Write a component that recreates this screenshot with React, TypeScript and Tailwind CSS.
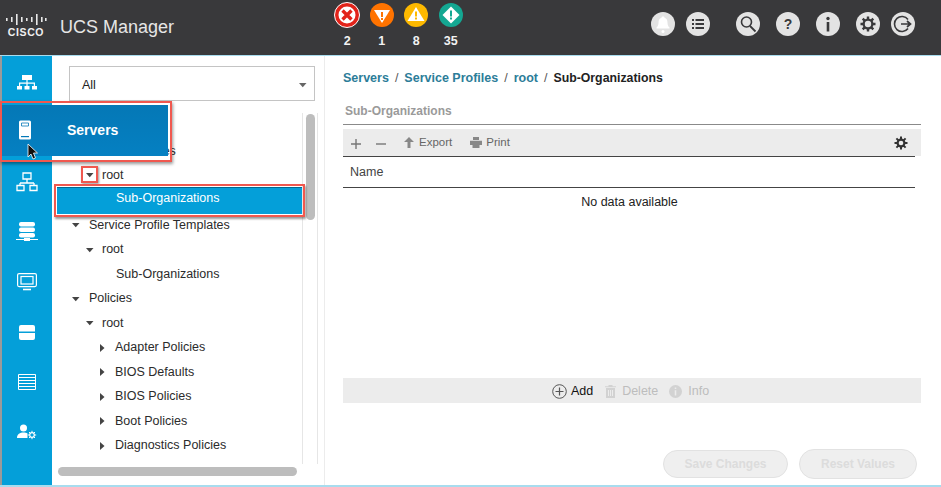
import React from "react";

const font = { fontFamily: '"Liberation Sans", Arial, sans-serif' };

const CiscoLogo = () => (
  <div className="mb-[4px] ml-[5px] flex w-[42px] shrink-0 flex-col items-center">
    <svg width="41" height="11" viewBox="0 0 41 11" fill="#e8e8e8">
      {[
        [0, 4, 3],
        [5, 3, 5],
        [10, 0, 11],
        [15, 3, 5],
        [20, 4, 3],
        [25, 3, 5],
        [30, 0, 11],
        [35, 3, 5],
        [39, 4, 3],
      ].map(([x, y, h]) => (
        <rect key={x} x={x} y={y} width="1.6" height={h} />
      ))}
    </svg>
    <span className="mt-[2px] text-[10.5px] leading-[11px] font-bold tracking-[0.6px] text-[#f0f0f0]">CISCO</span>
  </div>
);

const Tri = ({ dir = "down", color = "#444" }: { dir?: "down" | "right"; color?: string }) => (
  <svg width="8" height="8" viewBox="0 0 8 8" fill={color} className="shrink-0">
    {dir === "down" ? <path d="M0 2h7.5L3.75 6.2z" /> : <path d="M1 0v8l4.5-4z" />}
  </svg>
);

const alerts = [
  {
    n: "2",
    icon: (
      <svg viewBox="0 0 26 26" className="h-[26px] w-[26px]">
        <circle cx="13" cy="13" r="12.5" fill="#e2231a" stroke="#fff" strokeWidth="1" />
        <circle cx="13" cy="13" r="8.5" fill="#fff" />
        <path d="M8.5 8.5l9 9M17.5 8.5l-9 9" stroke="#e2231a" strokeWidth="3.4" />
      </svg>
    ),
  },
  {
    n: "1",
    icon: (
      <svg viewBox="0 0 24 24" className="h-6 w-6">
        <circle cx="12" cy="12" r="12" fill="#ff7300" />
        <path d="M4 7h16l-8 13z" fill="#fff" />
        <path d="M11 9h2v5h-2zM11 15h2v2h-2z" fill="#ff7300" />
      </svg>
    ),
  },
  {
    n: "8",
    icon: (
      <svg viewBox="0 0 24 24" className="h-6 w-6">
        <circle cx="12" cy="12" r="12" fill="#fdb900" />
        <path d="M12 4l8.5 14h-17z" fill="#fff" />
        <path d="M11 8.500h2v5h-2zM11 14.500h2v2h-2z" fill="#fdb900" />
      </svg>
    ),
  },
  {
    n: "35",
    icon: (
      <svg viewBox="0 0 24 24" className="h-6 w-6">
        <circle cx="12" cy="12" r="12" fill="#14a792" />
        <path d="M12 3.500l8.500 8.500-8.500 8.500-8.500-8.500z" fill="#fff" />
        <path d="M11 7.500h2v6h-2zM11 14.500h2v2h-2z" fill="#14a792" />
      </svg>
    ),
  },
];

const Circle = ({ className = "", children }: { className?: string; children: React.ReactNode }) => (
  <div className={`flex h-6 w-6 shrink-0 items-center justify-center rounded-full bg-[#e3e3e3] ${className}`}>
    <svg viewBox="0 0 24 24" className="h-6 w-6">
      {children}
    </svg>
  </div>
);

const Header = () => (
  <header className="flex h-[55px] shrink-0 items-center bg-[#39393b]">
    <CiscoLogo />
    <span className="ml-[13px] w-[120px] text-[18px] whitespace-nowrap text-[#e6e6e6]">UCS Manager</span>
    <div className="ml-[150px] flex w-[140px] self-start pt-[2px]">
      {alerts.map((a) => (
        <div key={a.n} className="flex w-[34.5px] flex-col items-center">
          <div className="flex h-[26px] items-center">{a.icon}</div>
          <span className="mt-[6px] text-[12.5px] leading-[14px] font-bold text-[#f2f2f2]">{a.n}</span>
        </div>
      ))}
    </div>
    <div className="ml-[181px] flex items-center pb-[7px]">
      <Circle>
        <path d="M12 4.500c1 0 1.500.6 1.500 1.200 2.200.7 3 2.600 3 5 0 2.400.8 3.600 2 4.800v1H5.500v-1c1.200-1.200 2-2.400 2-4.800 0-2.400.8-4.300 3-5 0-.6.500-1.200 1.500-1.200z" fill="#fff" />
        <circle cx="12" cy="19.500" r="1.500" fill="#fff" />
      </Circle>
      <Circle className="ml-[11px]">
        <path d="M6 7h2v2H6zM6 11h2v2H6zM6 15h2v2H6zM9.500 7H18v2H9.500zM9.500 11H18v2H9.500zM9.500 15H18v2H9.500z" fill="#39393b" />
      </Circle>
      <Circle className="ml-[26px]">
        <circle cx="10.500" cy="10" r="5" fill="none" stroke="#39393b" strokeWidth="1.600" />
        <path d="M14 14l5.500 5.500" stroke="#39393b" strokeWidth="1.800" />
      </Circle>
      <Circle className="ml-[16px]">
        <text x="12" y="17" textAnchor="middle" fontSize="14" fontWeight="700" fill="#39393b">?</text>
      </Circle>
      <Circle className="ml-[16px]">
        <circle cx="12" cy="6.500" r="1.700" fill="#39393b" />
        <path d="M10.700 10h2.600v9.500h-2.600z" fill="#39393b" />
      </Circle>
      <Circle className="ml-[16px]">
        <g stroke="#39393b" strokeWidth="2.400">
          <path d="M12 4.500v15M4.500 12h15M6.700 6.700l10.600 10.600M17.300 6.700L6.700 17.300" />
        </g>
        <circle cx="12" cy="12" r="5.500" fill="#39393b" />
        <circle cx="12" cy="12" r="3.200" fill="#e3e3e3" />
      </Circle>
      <Circle className="ml-[11px]">
        <path d="M17 7.500a7.500 7.500 0 1 0 0 9" fill="none" stroke="#39393b" strokeWidth="1.600" />
        <path d="M10 12h9M16 9l3.500 3-3.500 3" fill="none" stroke="#39393b" strokeWidth="1.700" />
      </Circle>
    </div>
  </header>
);

const navIcons = [
  <svg key="1" width="22" height="16" viewBox="0 0 22 16" fill="#fff" className="mt-[2px]">
    <path d="M6 0h10v5H6zM10.400 5h1.200v3h-1.200zM3 7.500h16v1.200H3zM3 8h1.200v3H3zM10.400 8h1.200v3h-1.200zM17.800 8h1.200v3h-1.200zM1 11h5v3.500H1zM8.500 11h5v3.500h-5zM16 11h5v3.500h-5z" />
  </svg>,
  <svg key="2" width="14" height="20" viewBox="0 0 14 20">
    <rect x="1" y="0.500" width="12" height="19" rx="1.500" fill="#fff" />
    <path d="M3.500 3h7v3h-7z" fill="none" stroke="#0579b8" strokeWidth="0.800" />
    <path d="M3 16h8v1.200H3z" fill="#0579b8" />
  </svg>,
  <svg key="3" width="22" height="20" viewBox="0 0 22 20" fill="none" stroke="#fff" strokeWidth="1.300">
    <path d="M7 1h8v6H7zM11 7v4M4 11h14M4 11v2M18 11v2M1 13.500h7v5H1zM14 13.500h7v5h-7z" />
  </svg>,
  <svg key="4" width="22" height="20" viewBox="0 0 22 20" fill="#fff">
    <rect x="3" y="0" width="16" height="4.500" rx="2" />
    <rect x="3" y="5.500" width="16" height="4.500" rx="2" />
    <rect x="3" y="11" width="16" height="4.500" rx="2" />
    <path d="M0 17h22v1H0zM8 16h6v3H8z" />
  </svg>,
  <svg key="5" width="20" height="18" viewBox="0 0 20 18" fill="none" stroke="#fff" strokeWidth="1.200">
    <rect x="0.600" y="0.600" width="18.800" height="13" rx="1.500" />
    <rect x="4" y="3.500" width="12" height="7.500" />
    <path d="M6 16.500h8" strokeWidth="1.600" />
  </svg>,
  <svg key="6" width="16" height="15" viewBox="0 0 16 15" fill="#fff">
    <path d="M2 0h12a2 2 0 0 1 2 2v4.500H0V2a2 2 0 0 1 2-2zM0 8h16v5a2 2 0 0 1-2 2H2a2 2 0 0 1-2-2z" />
  </svg>,
  <svg key="7" width="18" height="16" viewBox="0 0 18 16" fill="none" stroke="#fff" strokeWidth="1">
    <path d="M.5.500h17v15H.5zM.5 3.500h17M.5 6.500h17M.5 9.500h17M.5 12.500h17" />
  </svg>,
  <svg key="8" width="21" height="16" viewBox="0 0 21 16">
    <circle cx="6.500" cy="4" r="3.500" fill="#fff" />
    <path d="M0 14c0-4 3-5.500 6.500-5.500 1.500 0 3 .3 4 1V14z" fill="#fff" />
    <circle cx="15" cy="11" r="2.300" fill="none" stroke="#fff" strokeWidth="1.200" />
    <path d="M15 6.800v2M15 13.200v2M10.800 11h2M17.200 11h2M12 8l1.400 1.400M16.600 12.600l1.400 1.400M18 8l-1.400 1.400M13.400 12.600L12 14" stroke="#fff" strokeWidth="1" />
  </svg>,
];

const Sidebar = () => (
  <nav className="flex w-[52px] shrink-0 flex-col border-l-2 border-[#9a9a9a] bg-[#049fd9] pt-[1px]">
    {navIcons.map((icon, i) => (
      <div key={i} className="flex h-[50px] items-center justify-center">
        {icon}
      </div>
    ))}
  </nav>
);

const treeRows: { label: string; level: number; arrow?: "down" | "right" }[] = [
  { label: "", level: 0 },
  { label: "Service Profiles", level: 1, arrow: "down" },
  { label: "root", level: 2 },
  { label: "", level: 3 },
  { label: "Service Profile Templates", level: 1, arrow: "down" },
  { label: "root", level: 2, arrow: "down" },
  { label: "Sub-Organizations", level: 3 },
  { label: "Policies", level: 1, arrow: "down" },
  { label: "root", level: 2, arrow: "down" },
  { label: "Adapter Policies", level: 3, arrow: "right" },
  { label: "BIOS Defaults", level: 3, arrow: "right" },
  { label: "BIOS Policies", level: 3, arrow: "right" },
  { label: "Boot Policies", level: 3, arrow: "right" },
  { label: "Diagnostics Policies", level: 3, arrow: "right" },
];

const indent = ["ml-[7px]", "ml-[15px]", "ml-[29px]", "ml-[42px]"];

const TreePanel = () => (
  <aside className="relative flex w-[272px] shrink-0 flex-col bg-white">
    <div className="mt-[10px] ml-[17px] flex h-[35px] w-[246px] items-center justify-between border border-[#c4c4c4] pt-[3px] pr-[7px] pl-[12px] text-[12.5px] text-[#222]">
      <span>All</span>
      <Tri color="#666" />
    </div>
    <div className="mt-[12px] ml-[5px] flex h-[351px] items-start overflow-hidden">
      <div className="h-full w-[246px] border-r border-[#e6e6e6] pt-[2px]">
        {treeRows.map((r, i) => (
          <div key={i} className="flex h-[24.5px] items-center text-[12.5px] text-[#2b2b2b]">
            <div className={`flex w-[16px] items-center ${indent[r.level]}`}>
              {r.arrow && <Tri dir={r.arrow} />}
            </div>
            <span className={`${(r.level === 3 && !r.arrow) || r.level === 1 ? "ml-[1px]" : ""} ${r.level === 2 && !r.arrow ? "pb-[2px]" : ""}`}>
              {r.label}
            </span>
          </div>
        ))}
      </div>
      <div className="mt-[1px] ml-[3px] h-[106px] w-[9px] rounded-full bg-[#bdbdbd]" />
      <div className="ml-[2px] h-full border-r border-[#e6e6e6]" />
    </div>
    <div className="mt-[3px] ml-[6px] h-[9px] w-[239px] rounded-full bg-[#bdbdbd]" />
  </aside>
);

const Gear = ({ color }: { color: string }) => (
  <svg width="14" height="14" viewBox="0 0 14 14">
    <g stroke={color} strokeWidth="2">
      <path d="M7 .5v13M.5 7h13M2.400 2.400l9.200 9.200M11.600 2.400l-9.200 9.200" />
    </g>
    <circle cx="7" cy="7" r="4.500" fill={color} />
    <circle cx="7" cy="7" r="2.300" fill="#ececec" />
  </svg>
);

const Content = () => (
  <main className="flex min-w-0 flex-1 flex-col border-l border-[#ececec] bg-white pl-[18px]">
    <div className="mt-[14px] flex h-[16px] items-center gap-[6px] text-[12.5px] font-bold text-[#2c7d99]">
      <span>Servers</span>
      <span className="font-normal text-[#555]">/</span>
      <span>Service Profiles</span>
      <span className="font-normal text-[#555]">/</span>
      <span>root</span>
      <span className="font-normal text-[#555]">/</span>
      <span className="text-[12.300px] text-[#222]">Sub-Organizations</span>
    </div>
    <div className="mt-[17px] w-[578px] border-b border-[#8a8a8a] pb-[5px] pl-[2px] text-[12px] leading-[16px] font-bold text-[#9a9a9a]">
      Sub-Organizations
    </div>
    <div className="mt-[4px] flex h-[27px] w-[578px] items-center bg-[#ececec] pr-[13px] pl-[8px] text-[11.500px] text-[#666]">
      <svg width="10" height="10" viewBox="0 0 10 10" fill="#777" className="mt-[2px]">
        <path d="M4.300 0h1.400v4.300H10v1.400H5.700V10H4.300V5.700H0V4.300h4.300z" />
      </svg>
      <svg width="10" height="10" viewBox="0 0 10 10" fill="#777" className="mt-[2px] ml-[15px]">
        <path d="M0 4.300h10v1.400H0z" />
      </svg>
      <svg width="10" height="11" viewBox="0 0 10 11" fill="#888" className="ml-[18px]">
        <path d="M5 0l5 5H6.500v6h-3V5H0z" />
      </svg>
      <span className="ml-[5px]">Export</span>
      <svg width="12" height="11" viewBox="0 0 12 11" fill="#888" className="ml-[18px]">
        <path d="M3 0h6v3H3zM0 3.700h12V8H9.500v3h-7V8H0z" />
      </svg>
      <span className="ml-[4px]">Print</span>
      <div className="ml-auto">
        <Gear color="#333" />
      </div>
    </div>
    <div className="flex h-[32px] w-[572px] items-center border-y border-[#444] pl-[7px] text-[12.500px] text-[#444]">Name</div>
    <div className="flex h-[28px] w-[572px] items-center justify-center pl-[1px] text-[12.500px] text-[#222]">No data available</div>
    <div className="mt-[162px] flex h-[25px] w-[578px] items-center justify-center bg-[#ececec] pt-[2px] pr-[3px] text-[12.500px] text-[#bdbdbd]">
      <svg width="15" height="15" viewBox="0 0 15 15" fill="none" stroke="#555">
        <circle cx="7.500" cy="7.500" r="6.800" />
        <path d="M7.500 3.500v8M3.500 7.500h8" strokeWidth="1.200" />
      </svg>
      <span className="ml-[4px] text-[#111]">Add</span>
      <svg width="11" height="13" viewBox="0 0 11 13" fill="#d2d2d2" className="ml-[12px]">
        <path d="M3.500 0h4v1.200h3.500v1H0v-1h3.500zM1 3h9v10H1zM3 5v6h1V5zM5 5v6h1V5zM7 5v6h1V5z" />
      </svg>
      <span className="ml-[6px]">Delete</span>
      <svg width="13" height="13" viewBox="0 0 13 13" className="ml-[11px]">
        <circle cx="6.500" cy="6.500" r="6.500" fill="#d2d2d2" />
        <path d="M5.700 2.500h1.600v1.600H5.700zM5.700 5.300h1.600v5.200H5.700z" fill="#ececec" />
      </svg>
      <span className="ml-[6px]">Info</span>
    </div>
    <div className="mt-[46px] flex w-[574px] items-center justify-end gap-[11px] text-[12px] font-bold text-[#dcdcdc]">
      <button className="h-[28px] w-[125px] rounded-[14px] border border-[#e2e2e2] bg-[#efefef]">Save Changes</button>
      <button className="h-[30px] w-[118px] rounded-[15px] border border-[#e2e2e2] bg-[#efefef]">Reset Values</button>
    </div>
  </main>
);

const Callouts = () => (
  <>
    {/* Servers flyout */}
    <div className="absolute top-[101px] left-0 h-[61px] w-[172px] border-2 border-[#f0584f] shadow-[1px_2px_3px_rgba(0,0,0,0.4)]">
      <div className="mt-[2px] flex h-[51px] w-[166px] items-center bg-gradient-to-b from-[#0578b6] to-[#0580c2] pl-[65px] text-[14px] font-bold text-white">
        Servers
      </div>
    </div>
    <div className="absolute top-[120px] left-[18px]">{navIcons[1]}</div>
    {/* cursor */}
    <svg className="absolute top-[143px] left-[27px]" width="12" height="18" viewBox="0 0 12 18">
      <path d="M1 1v13l3-3 2 5 2.500-1-2-5H10.500z" fill="#111" stroke="#fff" strokeWidth="0.800" />
    </svg>
    {/* root arrow */}
    <div className="absolute top-[166px] left-[81px] flex h-[17px] w-[17px] items-center justify-center border-2 border-[#f0584f] shadow-[1px_1px_2px_rgba(0,0,0,0.4)]">
      <Tri />
    </div>
    {/* selected row */}
    <div className="absolute top-[184px] left-[54px] h-[33px] w-[251px] border-2 border-[#f0584f] shadow-[1px_2px_2px_rgba(0,0,0,0.4)]">
      <div className="mt-[1px] ml-[1px] flex h-[27px] w-[245px] items-center border-t border-[#05698f] bg-[#049fd9] pb-[6px] pl-[59px] text-[12.500px] text-white">
        Sub-Organizations
      </div>
    </div>
  </>
);

export default function App() {
  return (
    <div className="relative flex h-[487px] w-[941px] flex-col overflow-hidden bg-white" style={font}>
      <Header />
      <div className="h-[1px] shrink-0 bg-[#a8dcee]" />
      <div className="flex min-h-0 flex-1">
        <Sidebar />
        <TreePanel />
        <Content />
      </div>
      <div className="h-[2px] shrink-0 bg-[#a8dcee]" />
      <Callouts />
    </div>
  );
}
